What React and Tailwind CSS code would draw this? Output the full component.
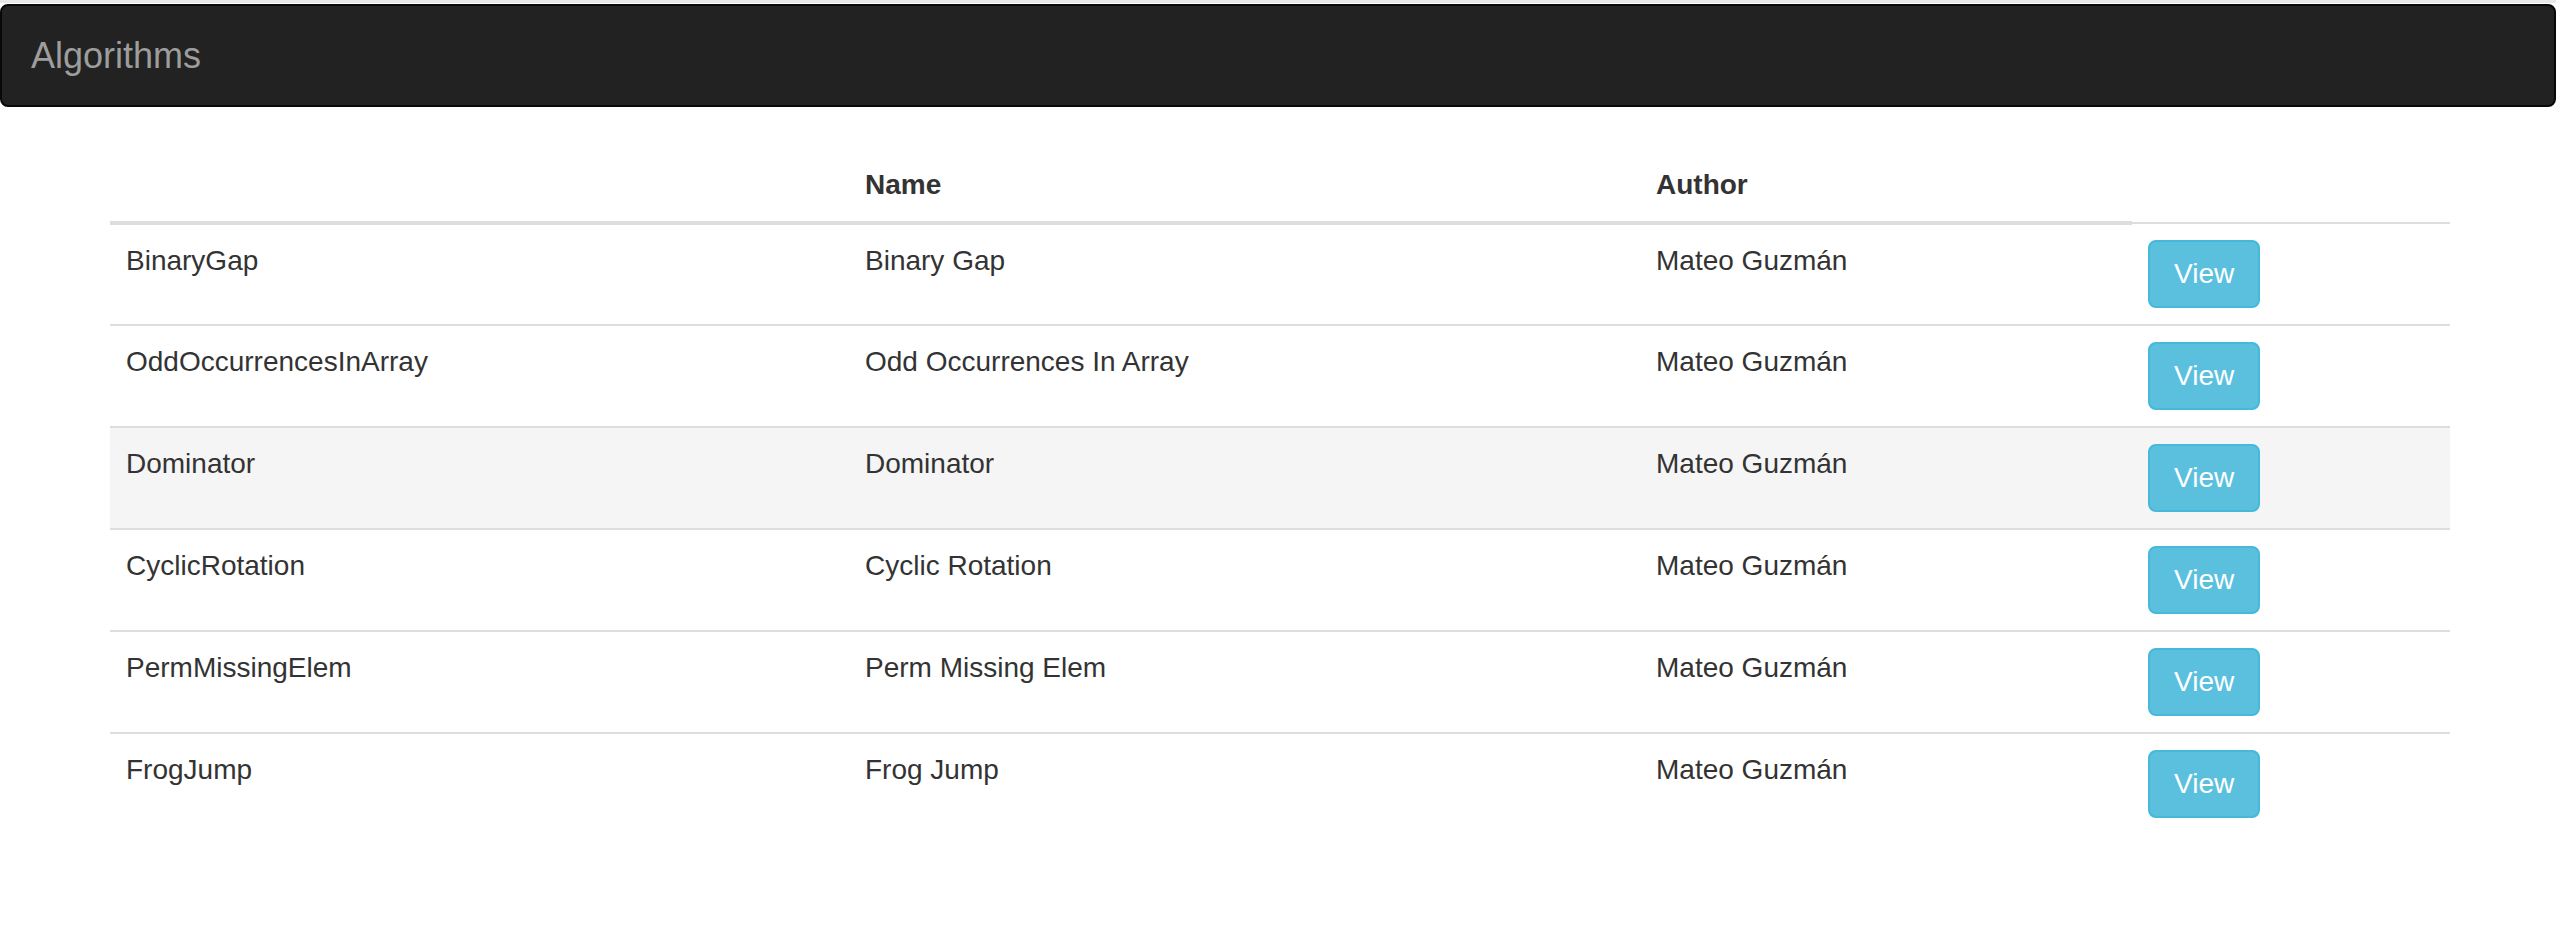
import React from 'react';

const algorithms = [
  { id: 'BinaryGap', name: 'Binary Gap', author: 'Mateo Guzmán' },
  { id: 'OddOccurrencesInArray', name: 'Odd Occurrences In Array', author: 'Mateo Guzmán' },
  { id: 'Dominator', name: 'Dominator', author: 'Mateo Guzmán', hover: true },
  { id: 'CyclicRotation', name: 'Cyclic Rotation', author: 'Mateo Guzmán' },
  { id: 'PermMissingElem', name: 'Perm Missing Elem', author: 'Mateo Guzmán' },
  { id: 'FrogJump', name: 'Frog Jump', author: 'Mateo Guzmán' },
];

const App = () => {
  return (
    <div className="min-h-[928px] bg-white text-[#333] font-['Liberation_Sans',Arial,sans-serif] text-[28px] leading-[40px]">
      <div className="h-[3px] bg-[#e8e8e8]" />

      {/* navbar */}
      <nav className="mt-px h-[103px] bg-[#222] border-2 border-[#080808] rounded-lg flex items-center">
        <span className="px-[29px] text-[36px] leading-[40px] text-[#9d9d9d]">Algorithms</span>
      </nav>

      <div className="mt-[42px] ml-[110px] w-[2340px]">
        <table className="w-full border-collapse text-left">
          <colgroup>
            <col className="w-[739px]" />
            <col className="w-[791px]" />
            <col className="w-[492px]" />
            <col className="w-[318px]" />
          </colgroup>
          <thead>
            <tr>
              <th className="p-4 border-b-4 border-[#ddd]" />
              <th className="p-4 font-bold border-b-4 border-[#ddd]">Name</th>
              <th className="p-4 font-bold border-b-4 border-[#ddd]">Author</th>
            </tr>
          </thead>
          <tbody>
            {algorithms.map((algo) => (
              <tr key={algo.id} className={algo.hover ? 'bg-[#f5f5f5]' : ''}>
                <td className="p-4 align-top border-t-2 border-[#ddd]">{algo.id}</td>
                <td className="p-4 align-top border-t-2 border-[#ddd]">{algo.name}</td>
                <td className="p-4 align-top border-t-2 border-[#ddd]">{algo.author}</td>
                <td className="p-4 align-top border-t-2 border-[#ddd]">
                  <button className="h-[68px] px-[24px] text-[28px] leading-[40px] text-white bg-[#5bc0de] border-2 border-[#46b8da] rounded-lg">
                    View
                  </button>
                </td>
              </tr>
            ))}
          </tbody>
        </table>
      </div>
    </div>
  );
};

export default App;
